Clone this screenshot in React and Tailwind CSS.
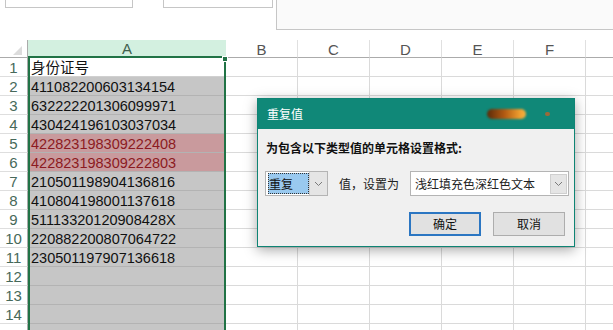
import React from "react";

const rows = [
  { n: 1, v: "身份证号", kind: "active" },
  { n: 2, v: "411082200603134154" },
  { n: 3, v: "632222201306099971" },
  { n: 4, v: "430424196103037034" },
  { n: 5, v: "422823198309222408", kind: "dup" },
  { n: 6, v: "422823198309222803", kind: "dup" },
  { n: 7, v: "210501198904136816" },
  { n: 8, v: "410804198001137618" },
  { n: 9, v: "51113320120908428X" },
  { n: 10, v: "220882200807064722" },
  { n: 11, v: "230501197907136618" },
  { n: 12, v: "" },
  { n: 13, v: "" },
  { n: 14, v: "" },
  { n: "", v: "" },
];

const cols = ["B", "C", "D", "E", "F"];

const font = { fontFamily: '"Liberation Sans", "Noto Sans CJK SC", sans-serif' };
const cjk = { fontFamily: '"Noto Sans CJK SC", "Liberation Sans", sans-serif' };

const Chevron = () => (
  <svg width="9" height="6" viewBox="0 0 9 6">
    <path d="M1 1 L4.5 4.5 L8 1" fill="none" stroke="#7a7a7a" strokeWidth="1" />
  </svg>
);

const Dialog = () => (
  <div
    className="absolute left-[257px] top-[98px] w-[318px] h-[149px] border border-[#0e8474] bg-[#f0f0f0] shadow-[0_3px_12px_rgba(0,0,0,0.35)] flex flex-col"
    style={cjk}
  >
    <div className="h-[30px] bg-[#108878] flex items-center pl-[9px] pr-[24px] shrink-0">
      <span className="text-[12px] text-white leading-none">重复值</span>
      <div className="ml-auto flex items-center">
        <div className="w-[39px] h-[10px] rounded-full bg-[linear-gradient(90deg,#5a2a0a,#b35a12_45%,#f0a030_85%,#f4b040)] blur-[1px]" />
        <div className="ml-[19px] w-[5px] h-[4px] rounded-full bg-[#9a6a3a] blur-[0.5px]" />
      </div>
    </div>
    <div className="pl-[8px] pt-[11px] text-[12px] leading-[16px] font-bold text-[#111]">
      为包含以下类型值的单元格设置格式:
    </div>
    <div className="flex items-center pl-[7px] mt-[15px] h-[25px]">
      <div className="w-[63px] h-[25px] border border-[#b4b4b4] bg-white flex items-center">
        <div className="ml-[2px] w-[41px] h-[21px] bg-[#99c9ef] border border-dotted border-[#333] flex items-center text-[12px] text-[#111]">
          重复
        </div>
        <div className="ml-auto w-[18px] h-[23px] bg-[#e5e5e5] border-l border-[#cfcfcf] flex items-center justify-center">
          <Chevron />
        </div>
      </div>
      <span className="ml-[11px] text-[12px] text-[#222]">值，设置为</span>
      <div className="ml-[11px] w-[159px] h-[25px] border border-[#b4b4b4] bg-white flex items-center">
        <span className="ml-[4px] text-[12px] text-[#222]">浅红填充色深红色文本</span>
        <div className="ml-auto mr-[1px] w-[17px] h-[20px] bg-[#e5e5e5] border border-[#cfcfcf] flex items-center justify-center">
          <Chevron />
        </div>
      </div>
    </div>
    <div className="flex justify-end pr-[9px] mt-[16px] gap-[12px]">
      <button className="w-[72px] h-[24px] bg-[#e1e1e1] border-2 border-[#2b76c2] text-[12px] text-[#111] flex items-center justify-center">
        确定
      </button>
      <button className="w-[72px] h-[24px] bg-[#e1e1e1] border border-[#adadad] text-[12px] text-[#111] flex items-center justify-center">
        取消
      </button>
    </div>
  </div>
);

export default function App() {
  return (
    <div className="relative w-[613px] h-[330px] overflow-hidden bg-white" style={font}>
      <div className="h-[40px] flex items-start">
        <div className="ml-[5px] w-[128px] h-[8px] border border-t-0 border-[#c6c6c6] bg-white" />
        <div className="ml-[30px] w-[110px] h-[8px] border border-t-0 border-[#c6c6c6] bg-white" />
        <div className="ml-[3px] flex-1 h-[30px] border-l border-b border-[#c6c6c6] bg-[#fafafa]" />
      </div>

      <div className="flex h-[18px]">
        <div className="w-[28px] h-full border-r border-b border-[#ababab] flex items-end justify-end pr-[5px] pb-[2px]">
          <svg width="9" height="9" viewBox="0 0 9 9">
            <path d="M9 0 L9 9 L0 9 Z" fill="#dcdcdc" />
          </svg>
        </div>
        <div className="w-[198px] h-full bg-[#d3f0e0] border-b-2 border-[#217346] text-center text-[15px] leading-[16px] pt-[1px] text-[#40604c]">
          A
        </div>
        {cols.map((c) => (
          <div
            key={c}
            className="w-[72px] h-full border-r border-b border-r-[#e0e0e0] border-b-[#ababab] text-center text-[15px] leading-[17px] pt-[1px] text-[#555]"
          >
            {c}
          </div>
        ))}
        <div className="flex-1 h-full border-b border-[#ababab]" />
      </div>

      {rows.map((r, i) => {
        const fill =
          r.kind === "active"
            ? "bg-white text-[#111]"
            : r.kind === "dup"
            ? "bg-[#c99a9d] text-[#8c1a22]"
            : "bg-[#c6c6c6] text-[#111]";
        return (
          <div key={i} className="flex h-[19px]">
            <div className="w-[28px] h-full border-r border-b border-r-[#ababab] border-b-[#dedede] text-center text-[15px] leading-[17px] pt-[1px] text-[#47695a]">
              {r.n}
            </div>
            <div
              className={`w-[198px] h-full border-l-2 border-r-2 border-l-[#217346] border-r-[#217346] ${fill}`}
            >
              <div
                className={`h-full border-b ${
                  r.kind === "active" ? "border-[#d0d0d0]" : "border-[#b3b3b3]"
                } pl-[1px] pt-[2px] text-[14.5px] leading-[17px] whitespace-nowrap`}
              >
                {r.v}
              </div>
            </div>
            {cols.map((c) => (
              <div key={c} className="w-[72px] h-full border-r border-b border-[#dadada]" />
            ))}
            <div className="flex-1 h-full border-b border-[#dadada]" />
          </div>
        );
      })}

      <div className="absolute left-[222px] top-[56px] w-[6px] h-[6px] bg-[#217346] border border-white" />

      <Dialog />
    </div>
  );
}
